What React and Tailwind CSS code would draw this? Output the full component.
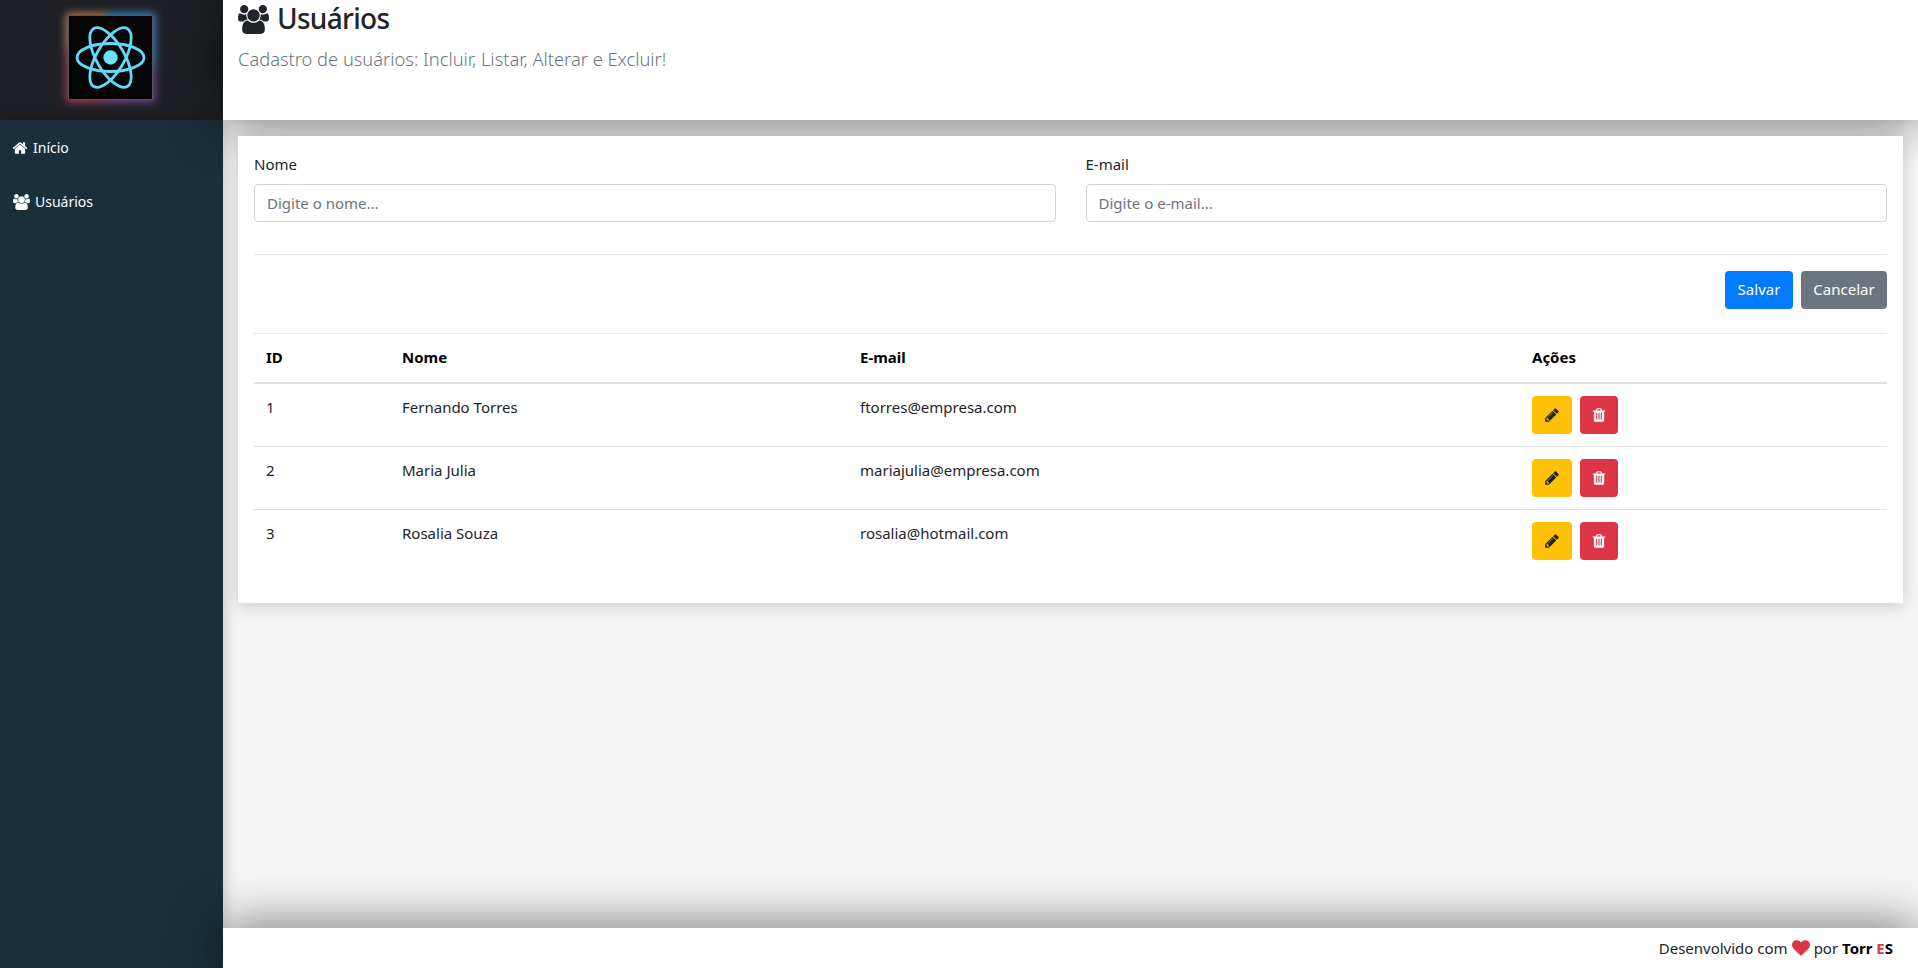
const FONT = '"Noto Sans", "Open Sans", sans-serif';

function Users({ className }) {
  return (
    <svg viewBox="0 0 1920 1792" className={className} fill="currentColor">
      <path d="M593 896q-162 5-265 128h-134q-82 0-138-40.5t-56-118.5q0-353 124-353 6 0 43.5 21t97.5 42.5 119 21.5q67 0 133-23-5 37-5 66 0 139 81 256zm1071 637q0 120-73 189.5t-194 69.5h-874q-121 0-194-69.5t-73-189.5q0-53 3.5-103.5t14-109 26.5-108.5 43-97.5 62-81 85.5-53.5 111.5-20q10 0 43 21.5t73 48 107 48 135 21.5 135-21.5 107-48 73-48 43-21.5q61 0 111.5 20t85.5 53.5 62 81 43 97.5 26.5 108.5 14 109 3.5 103.5zm-1024-1277q0 106-75 181t-181 75-181-75-75-181 75-181 181-75 181 75 75 181zm704 384q0 159-112.5 271.5t-271.5 112.5-271.5-112.5-112.5-271.5 112.5-271.5 271.5-112.5 271.5 112.5 112.5 271.5zm576 225q0 78-56 118.5t-138 40.5h-134q-103-123-265-128 81-117 81-256 0-29-5-66 66 23 133 23 59 0 119-21.5t97.5-42.5 43.5-21q124 0 124 353zm-128-609q0 106-75 181t-181 75-181-75-75-181 75-181 181-75 181 75 75 181z" />
    </svg>
  );
}
function Home({ className }) {
  return (
    <svg viewBox="0 0 1792 1792" className={className} fill="currentColor">
      <path d="M1472 992v480q0 26-19 45t-45 19h-384v-384h-256v384h-384q-26 0-45-19t-19-45v-480q0-1 .5-3t.5-3l575-474 575 474q1 2 1 6zm223-69l-62 74q-8 9-21 11h-3q-13 0-21-7l-692-577-692 577q-12 8-24 7-13-2-21-11l-62-74q-8-10-7-23.5t11-21.5l719-599q32-26 76-26t76 26l244 204v-195q0-14 9-23t23-9h192q14 0 23 9t9 23v408l219 182q10 8 11 21.5t-7 23.5z" />
    </svg>
  );
}
function Pencil({ className }) {
  return (
    <svg viewBox="0 0 1792 1792" className={className} fill="currentColor">
      <path d="M491 1536l91-91-235-235-91 91v107h128v128h107zm523-928q0-22-22-22-10 0-17 7l-542 542q-7 7-7 17 0 22 22 22 10 0 17-7l542-542q7-7 7-17zm-54-192l416 416-832 832h-416v-416zm683 96q0 53-37 90l-166 166-416-416 166-165q36-38 90-38 53 0 91 38l235 234q37 39 37 91z" />
    </svg>
  );
}
function Trash({ className }) {
  return (
    <svg viewBox="0 0 1792 1792" className={className} fill="currentColor">
      <path d="M704 1376v-704q0-14-9-23t-23-9h-64q-14 0-23 9t-9 23v704q0 14 9 23t23 9h64q14 0 23-9t9-23zm256 0v-704q0-14-9-23t-23-9h-64q-14 0-23 9t-9 23v704q0 14 9 23t23 9h64q14 0 23-9t9-23zm256 0v-704q0-14-9-23t-23-9h-64q-14 0-23 9t-9 23v704q0 14 9 23t23 9h64q14 0 23-9t9-23zm-544-992h448l-48-117q-7-9-17-11h-317q-10 2-17 11zm928 32v64q0 14-9 23t-23 9h-96v948q0 83-47 143.5t-113 60.5h-832q-66 0-113-58.5t-47-141.5v-952h-96q-14 0-23-9t-9-23v-64q0-14 9-23t23-9h309l70-167q15-37 54-63t79-26h320q40 0 79 26t54 63l70 167h309q14 0 23 9t9 23z" />
    </svg>
  );
}
function Heart({ className }) {
  return (
    <svg viewBox="0 0 1792 1792" className={className} fill="currentColor">
      <path d="M896 1664q-26 0-44-18l-624-602q-10-8-27.5-26t-55.5-65.5-68-97.5-53.5-121-23.5-138q0-220 127-344t351-124q62 0 126.5 21.5t120 58 95.5 68.5 76 68q36-36 76-68t95.5-68.5 120-58 126.5-21.5q224 0 351 124t127 344q0 221-229 450l-623 600q-18 18-44 18z" />
    </svg>
  );
}
function Atom() {
  return (
    <svg viewBox="0 0 85 85" className="block w-[85px] h-[85px]" fill="none" stroke="#63d9f7" strokeWidth="2.8">
      <circle cx="42.5" cy="42.5" r="7.2" fill="#6fe0fb" stroke="none" />
      <ellipse cx="42.5" cy="42.5" rx="33.5" ry="14" />
      <ellipse cx="42.5" cy="42.5" rx="33.5" ry="14" transform="rotate(60 42.5 42.5)" />
      <ellipse cx="42.5" cy="42.5" rx="33.5" ry="14" transform="rotate(120 42.5 42.5)" />
    </svg>
  );
}

const rows = [
  ["1", "Fernando Torres", "ftorres@empresa.com"],
  ["2", "Maria Julia", "mariajulia@empresa.com"],
  ["3", "Rosalia Souza", "rosalia@hotmail.com"],
];

export default function App() {
  return (
    <div
      className="grid grid-cols-[223px_1fr] grid-rows-[120px_1fr_40px] h-screen text-[15px] leading-6 text-[#212529] bg-[#f5f5f5] overflow-hidden"
      style={{ fontFamily: FONT }}
    >
      <div className="bg-[#1e2025] flex items-center justify-center z-10 pb-[6px] pr-[2px]">
        <div className="relative w-[85px] h-[85px]">
          <div className="absolute -inset-[2px] blur-[4px] opacity-75 bg-[conic-gradient(from_0deg,#3fa9f5_0deg,#3fa9f5_90deg,#8e55b0_110deg,#8e55b0_170deg,#d9486e_200deg,#d9486e_270deg,#e8985a_290deg,#e8985a_350deg,#3fa9f5_360deg)]" />
          <div className="relative w-[85px] h-[85px] bg-[#050506] outline outline-1 -outline-offset-1 outline-[#55555a]">
            <Atom />
          </div>
        </div>
      </div>

      <header className="bg-white z-20 px-[15px] shadow-[0_0_50px_rgba(0,0,0,0.62)]">
        <h1 className="flex items-center gap-[8px] text-[28px] tracking-[-0.7px] leading-[38px] font-medium h-[38px] text-[#212529]">
          <Users className="w-[31px] h-[29px]" />
          <span className="pb-[2px]">Usuários</span>
        </h1>
        <p className="mt-[6px] text-[18.3px] leading-[30px] font-light text-[#6c757d]">
          Cadastro de usuários: Incluir, Listar, Alterar e Excluir!
        </p>
      </header>

      <aside className="row-span-2 bg-[#1a2f3a] z-10 pt-px shadow-[0_0_15px_rgba(0,0,0,0.25)] text-white text-[14px]">
        <a className="flex items-center gap-[5px] h-[54px] pl-[12px]">
          <Home className="w-[16px] h-[16px]" />
          <span>Início</span>
        </a>
        <a className="flex items-center gap-[5px] h-[54px] pl-[13px]">
          <Users className="w-[17px] h-[16px]" />
          <span>Usuários</span>
        </a>
      </aside>

      <main className="p-[15px] pt-[16px] min-h-0">
        <div className="relative z-30 bg-white p-4 shadow-[0_3px_15px_rgba(0,0,0,0.18)]">
          <div className="grid grid-cols-2 gap-x-[30px]">
            <div>
              <label className="block mb-2">Nome</label>
              <input
                className="block w-full h-[38px] px-3 border border-[#ced4da] rounded bg-white placeholder:text-[#6c757d]"
                placeholder="Digite o nome..."
              />
            </div>
            <div>
              <label className="block mb-2">E-mail</label>
              <input
                className="block w-full h-[38px] px-3 border border-[#ced4da] rounded bg-white placeholder:text-[#6c757d]"
                placeholder="Digite o e-mail..."
              />
            </div>
          </div>
          <hr className="mt-8 mb-4 border-t border-[#e5e5e5]" />
          <div className="flex justify-end gap-2">
            <button className="w-[68px] h-[38px] pb-[2px] rounded bg-[#007bff] text-white">Salvar</button>
            <button className="w-[86px] h-[38px] pb-[2px] rounded bg-[#6c757d] text-white">Cancelar</button>
          </div>
          <hr className="mt-6 border-t border-[#e5e5e5]" />
          <table className="w-full table-fixed border-collapse mb-[15px]">
            <thead>
              <tr className="border-b-2 border-[#dee2e6] text-left text-black">
                <th className="w-[136px] px-3 pt-[11px] pb-[13px] font-bold">ID</th>
                <th className="w-[458px] px-3 pt-[11px] pb-[13px] font-bold">Nome</th>
                <th className="w-[672px] px-3 pt-[11px] pb-[13px] font-bold">E-mail</th>
                <th className="px-3 pt-[11px] pb-[13px] font-bold">Ações</th>
              </tr>
            </thead>
            <tbody>
              {rows.map((r) => (
                <tr key={r[0]} className="border-t border-[#dee2e6]">
                  <td className="px-3 pt-[11px] pb-3 align-top">{r[0]}</td>
                  <td className="px-3 pt-[11px] pb-3 align-top">{r[1]}</td>
                  <td className="px-3 pt-[11px] pb-3 align-top">{r[2]}</td>
                  <td className="p-3 align-top">
                    <div className="flex gap-2">
                      <button className="w-[40px] h-[38px] rounded bg-[#ffc107] text-[#212529] flex items-center justify-center">
                        <Pencil className="w-[16px] h-[16px]" />
                      </button>
                      <button className="w-[38px] h-[38px] rounded bg-[#dc3545] text-white flex items-center justify-center">
                        <Trash className="w-[16px] h-[16px]" />
                      </button>
                    </div>
                  </td>
                </tr>
              ))}
            </tbody>
          </table>
        </div>
      </main>

      <footer className="bg-white z-20 flex items-center justify-end pr-[25px] text-[15px] shadow-[0_0_50px_rgba(0,0,0,0.62)]">
        <span>Desenvolvido com</span>
        <Heart className="w-[18px] h-[18px] mx-[4px] text-[#dc3545]" />
        <span>por&nbsp;</span>
        <b className="text-black">
          Torr <span className="text-[#dc3545]">E</span>S
        </b>
      </footer>
    </div>
  );
}
